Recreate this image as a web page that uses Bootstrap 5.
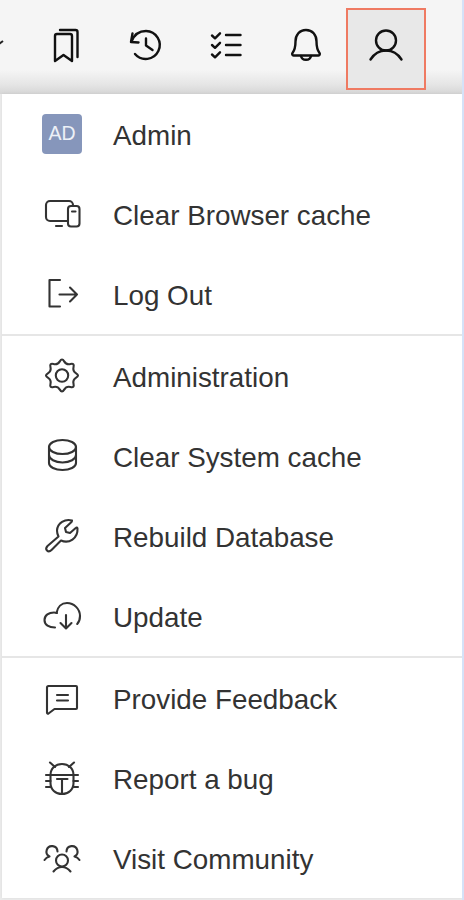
<!DOCTYPE html>
<html lang="en"><head><meta charset="utf-8">
<title>Menu</title>
<link href="https://cdn.jsdelivr.net/npm/bootstrap@5.3.0/dist/css/bootstrap.min.css" rel="stylesheet">
<style>
html,body{height:900px;overflow:hidden}
body{background:#ececec;border-right:2px solid #d5e2f8;font-family:"Liberation Sans",Arial,sans-serif;color:#333}
.topbar{height:94px;padding-right:36px;background:linear-gradient(#f5f5f5 0,#f5f5f5 70px,#e6e6e6 84px,#d6d6d6 94px)}
.topico{width:80px;height:82px;margin-top:8px;padding-bottom:8px;color:#111}
.topico svg{width:40px;height:40px;fill:none;stroke:currentColor;stroke-width:2.4;stroke-linecap:round;stroke-linejoin:round}
.topico.sel{background:#e8e8e8;outline:2px solid #ef7a62;outline-offset:-2px}
.stub{width:4px;height:6px;margin-top:39px;margin-right:auto;fill:none;stroke:#222;stroke-width:2}
.usermenu{width:460px;margin-left:2px;height:804px;background:#fff;box-shadow:0 0 3px rgba(0,0,0,.08)}
.mi{height:80px;padding-left:40px;font-size:27.8px;color:#333}
.mi-ico{width:40px;flex:none;margin-right:31px;color:#333}
.mi-ico svg{width:40px;height:40px;display:block;margin-top:2px;fill:none;stroke:currentColor;stroke-width:2.1;stroke-linecap:round;stroke-linejoin:round}
.av{width:40px;height:40px;border-radius:4px;background:#8696bb;color:#edf0f7;font-size:19.500px}
.sep{height:2px;background:#e6e6e6;margin:0}
.lbl{padding-top:4px}
</style></head><body>
<div class="topbar d-flex">
 <svg class="stub" viewBox="0 0 4 6"><path d="M-1 5L3 2"/></svg>
 <div class="topico d-flex align-items-center justify-content-center"><svg viewBox="0 0 40 40"><path d="M9 36V11a2 2 0 0 1 2-2h13a2 2 0 0 1 2 2v25l-8.500-6z"/><path d="M14 5h15.500a2 2 0 0 1 2 2v25"/></svg></div>
 <div class="topico d-flex align-items-center justify-content-center"><svg viewBox="0 0 40 40"><path d="M6.500 8.500L5 17l7.500.5"/><path d="M5.500 16.500C8 10 13.500 6 20 6a14 14 0 1 1-11 23"/><path d="M20 13.500V20.500l6.500 4.500"/></svg></div>
 <div class="topico d-flex align-items-center justify-content-center"><svg viewBox="0 0 40 40"><path d="M20 10h14.500M20 20h14.500M20 30h14.500"/><path d="M6 10.500l3 2.800 5-5M6 20l3 2.800 5-5M6 29.500l3 2.800 5-5"/></svg></div>
 <div class="topico d-flex align-items-center justify-content-center"><svg viewBox="0 0 40 40"><path d="M20 5c-6.500 0-10.500 5-10.500 11.500 0 6-1.500 9.500-3 11.500-.7 1-.2 2.500 1 2.500h25c1.200 0 1.700-1.500 1-2.500-1.500-2-3-5.500-3-11.500C30.500 10 26.500 5 20 5z"/><path d="M15 31c.5 2.500 2.500 3.800 5 3.800s4.500-1.300 5-3.800"/></svg></div>
 <div class="topico sel d-flex align-items-center justify-content-center"><svg viewBox="0 0 40 40"><circle cx="20" cy="15.500" r="10"/><path d="M4.500 34.500C8 29 13.500 25.500 20 25.500s12 3.500 15.500 9"/></svg></div>
</div>
<div class="usermenu">
 <div class="mi d-flex align-items-center"><div class="mi-ico"><div class="av d-flex align-items-center justify-content-center">AD</div></div><span class="lbl">Admin</span></div>
 <div class="mi d-flex align-items-center"><div class="mi-ico"><svg viewBox="0 0 40 40"><path d="M25 26H8a4 4 0 0 1-4-4V10a4 4 0 0 1 4-4h19a4 4 0 0 1 4 4v1"/><path d="M14 31h6"/><rect x="26" y="11" width="11.500" height="20.500" rx="3"/><path d="M30 16.500h3.500"/></svg></div><span class="lbl">Clear Browser cache</span></div>
 <div class="mi d-flex align-items-center"><div class="mi-ico"><svg viewBox="0 0 40 40"><path d="M18 5H7.500v26.500H18"/><path d="M17.500 19.500H35M28 12.500l7 7-7 7"/></svg></div><span class="lbl">Log Out</span></div>
 <div class="sep"></div>
 <div class="mi d-flex align-items-center"><div class="mi-ico"><svg viewBox="0 0 40 40"><circle cx="20" cy="18.500" r="6.200"/><path transform="translate(20 18.500) scale(1.080)" stroke-width="1.950" d="M13.100 2.010Q9.700 4.020 10.685 7.845T7.845 10.685T2.010 13.100T-2.010 13.100T-7.845 10.685T-10.685 7.845T-13.100 2.010T-13.100-2.010T-10.685-7.845T-7.845-10.685T-2.010-13.100T2.010-13.100T7.845-10.685T10.685-7.845T13.100-2.010T13.100 2.010z"/></svg></div><span class="lbl">Administration</span></div>
 <div class="mi d-flex align-items-center"><div class="mi-ico"><svg viewBox="0 0 40 40"><ellipse cx="20.500" cy="10" rx="13.500" ry="7"/><path d="M7 10v16c0 4 6 7 13.500 7S34 30 34 26V10"/><path d="M7 18c0 4 6 7.500 13.500 7.500S34 22 34 18"/></svg></div><span class="lbl">Clear System cache</span></div>
 <div class="mi d-flex align-items-center"><div class="mi-ico"><svg viewBox="0 0 40 40"><path d="M30 3.500C23 1.500 15.500 6 15 13.500c0 2 .5 4 1.500 6L5.500 29c-2 2-1.500 3.500-.5 4.500s2.500 1.500 4.500-.5L19 23.500c8 3.500 17-2 16.500-12-.1-1-1-1.200-1.500-.7L28 16l-4-1-1-4 6.500-6c.6-.6.4-1.300.5-1.500z"/></svg></div><span class="lbl">Rebuild Database</span></div>
 <div class="mi d-flex align-items-center"><div class="mi-ico"><svg viewBox="0 0 40 40"><path d="M35.200 27C37.500 24.500 38 22 38 19 38 12 32 6 25 6 19.500 6 15.500 10 14.500 16"/><path d="M13 30.500C7 30.500 2.500 28 2.500 23S7 15.500 12 15.500c1 0 2 .2 3 .5"/><path d="M24 18v13M18.500 26l5.500 5.500 5.500-5.500"/></svg></div><span class="lbl">Update</span></div>
 <div class="sep"></div>
 <div class="mi d-flex align-items-center"><div class="mi-ico"><svg viewBox="0 0 40 40"><path d="M6.500 7H34a1 1 0 0 1 1 1v21a1 1 0 0 1-1 1H12.500l-6 4.500c-.7.4-1.500 0-1.500-.8V8.500A1.500 1.500 0 0 1 6.500 7z"/><path d="M15 16h11M15 21.500h11"/></svg></div><span class="lbl">Provide Feedback</span></div>
 <div class="mi d-flex align-items-center"><div class="mi-ico"><svg viewBox="0 0 40 40"><path d="M8.500 16C8.500 9.500 13.500 5 20 5s11.500 4.500 11.500 11v8c0 6.500-5 11-11.500 11S8.500 30.500 8.500 24z"/><path d="M8.500 16h23M15 20h10.500M20 20v15M8 3.500l5 4.500M32 3.500l-5 4.500M4 16h4.500M4 22h4.500M4 28h5M36 16h-4.500M36 22h-4.500M36 28h-5"/></svg></div><span class="lbl">Report a bug</span></div>
 <div class="mi d-flex align-items-center"><div class="mi-ico"><svg viewBox="0 0 40 40"><circle cx="20" cy="21.500" r="6"/><path d="M11.500 32.500C14 29.500 17 28 20 28s6 1.500 8.500 4.500"/><path d="M15.500 12.500A5.500 5.500 0 1 0 7.500 17.500C5.500 18 3.500 19.500 2.500 21"/><path d="M24.500 12.500A5.500 5.500 0 1 1 32.500 17.500C34.500 18 36.500 19.500 37.500 21"/></svg></div><span class="lbl">Visit Community</span></div>
</div>
<script src="https://cdn.jsdelivr.net/npm/bootstrap@5.3.0/dist/js/bootstrap.bundle.min.js"></script>
</body></html>
